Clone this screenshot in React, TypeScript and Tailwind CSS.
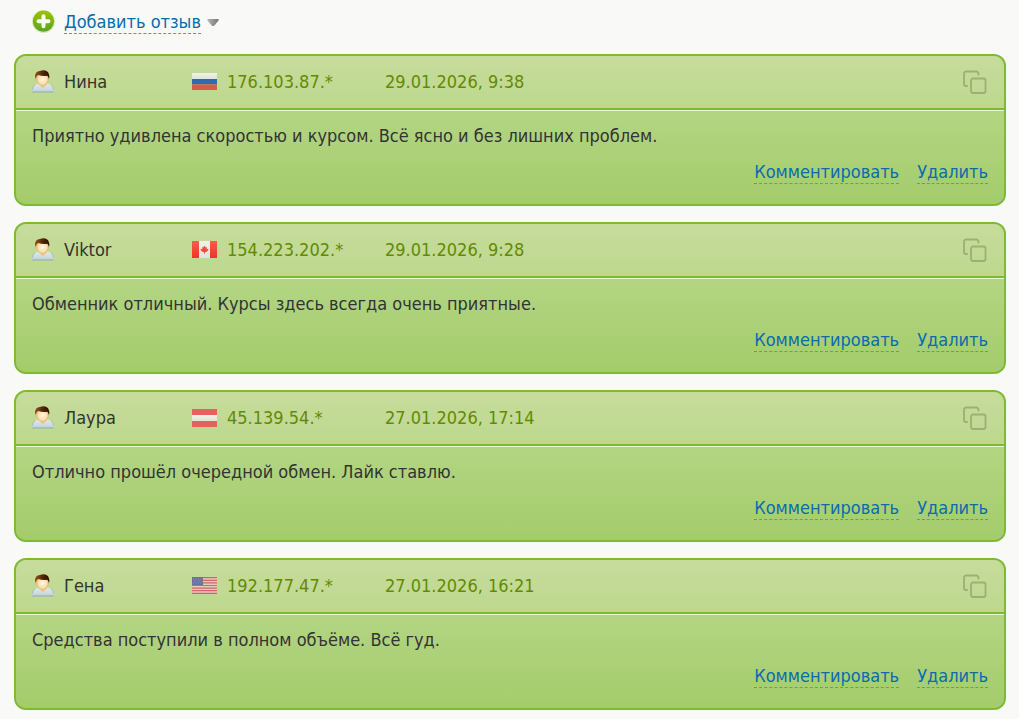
type Country = 'ru' | 'ca' | 'at' | 'us';

interface Review {
  name: string;
  country: Country;
  ip: string;
  date: string;
  text: string;
}

const reviews: Review[] = [
  {
    name: 'Нина',
    country: 'ru',
    ip: '176.103.87.*',
    date: '29.01.2026, 9:38',
    text: 'Приятно удивлена скоростью и курсом. Всё ясно и без лишних проблем.',
  },
  {
    name: 'Viktor',
    country: 'ca',
    ip: '154.223.202.*',
    date: '29.01.2026, 9:28',
    text: 'Обменник отличный. Курсы здесь всегда очень приятные.',
  },
  {
    name: 'Лаура',
    country: 'at',
    ip: '45.139.54.*',
    date: '27.01.2026, 17:14',
    text: 'Отлично прошёл очередной обмен. Лайк ставлю.',
  },
  {
    name: 'Гена',
    country: 'us',
    ip: '192.177.47.*',
    date: '27.01.2026, 16:21',
    text: 'Средства поступили в полном объёме. Всё гуд.',
  },
];

// Gradients shared by all icons on the page
function IconDefs() {
  return (
    <svg width="0" height="0" className="absolute" aria-hidden="true">
      <defs>
        <linearGradient id="plus" x1="0" y1="0" x2="0" y2="1">
          <stop offset="0" stopColor="#9cc400" />
          <stop offset="1" stopColor="#55a524" />
        </linearGradient>
        <linearGradient id="caret" x1="0" y1="0" x2="1" y2="0">
          <stop offset="0" stopColor="#b5b5b5" />
          <stop offset="1" stopColor="#777777" />
        </linearGradient>
        <radialGradient id="face" cx="0.5" cy="0.55" r="0.55">
          <stop offset="0" stopColor="#fff6e0" />
          <stop offset="0.6" stopColor="#fbdfae" />
          <stop offset="1" stopColor="#cf9450" />
        </radialGradient>
        <linearGradient id="hair" x1="0" y1="0" x2="1" y2="0">
          <stop offset="0" stopColor="#96591c" />
          <stop offset="0.5" stopColor="#54290a" />
          <stop offset="1" stopColor="#2a1202" />
        </linearGradient>
        <linearGradient id="shirt" x1="0" y1="0" x2="0" y2="1">
          <stop offset="0" stopColor="#dfe9ea" />
          <stop offset="0.75" stopColor="#c9d8da" />
          <stop offset="1" stopColor="#9fb9b6" />
        </linearGradient>
        <linearGradient id="white" x1="0" y1="0" x2="0" y2="1">
          <stop offset="0" stopColor="#eff2e7" />
          <stop offset="1" stopColor="#dfe4d8" />
        </linearGradient>
        <linearGradient id="canada" x1="0" y1="0" x2="0" y2="1">
          <stop offset="0" stopColor="#f2604b" />
          <stop offset="1" stopColor="#ee3524" />
        </linearGradient>
      </defs>
    </svg>
  );
}

function PlusIcon() {
  return (
    <svg width="24" height="24" viewBox="0 0 24 24" aria-hidden="true">
      <circle cx="12.500" cy="11.500" r="11.500" fill="#dbe8c4" />
      <circle cx="12.500" cy="11.200" r="10.600" fill="url(#plus)" />
      <path d="M12.500 6.300v10M7.500 11.300h10" stroke="#fbfdf4" strokeWidth="4" strokeLinecap="round" />
    </svg>
  );
}

function UserIcon() {
  return (
    <svg width="22" height="24" viewBox="0 0 22 24" aria-hidden="true">
      <path d="M.5 22.500V19.500c0-3.800 3-5.300 6.500-6h7.500c4 .7 7 2.200 7 6v3z" fill="url(#shirt)" />
      <path d="M.5 19.500c.1-2.500 1-3.700 2.500-4.600M21.500 19.500c-.1-2.500-1-3.700-2.500-4.600M.5 22h21" stroke="#9fb9bb" strokeWidth="1" fill="none" />
      <path d="M7 14l4 4.500 4-4.500z" fill="#eec58c" />
      <path d="M3.800 7c0-4 2.500-6 6.700-6s6.700 2 6.700 6c0 4.500-2.500 8.700-6.700 8.700S3.800 11.500 3.800 7z" fill="url(#face)" />
      <path d="M3.200 9C2.300 4 4 1.200 8 1c4-1.500 8-.4 8.800 3 .7 1.800.6 3.500.1 5-.3-1.700-.8-2.700-1.900-3.300-3 .5-6 .2-8.700-.7C4.700 6 4 7.300 3.200 9z" fill="url(#hair)" />
    </svg>
  );
}

function CopyIcon() {
  return (
    <svg width="24" height="24" viewBox="0 0 24 24" fill="none" stroke="#9caf74" strokeWidth="1.800" aria-hidden="true">
      <rect x="8" y="8.500" width="14.500" height="14.500" rx="2" />
      <path d="M15.500 5.300V3.500a2 2 0 0 0-2-2H3a2 2 0 0 0-2 2V14a2 2 0 0 0 2 2h1.800" />
    </svg>
  );
}

function Flag({ country }: { country: Country }) {
  return (
    <svg width="25" height="18" viewBox="0 0 25 18" className="shrink-0" role="img" aria-label={country}>
      {country === 'ru' && (
        <>
          <path d="M0 0h25v6H0z" fill="url(#white)" />
          <path d="M0 6h25v5.500H0z" fill="#3a66ad" />
          <path d="M0 11.500h25V17H0z" fill="#d95b47" />
        </>
      )}
      {country === 'ca' && (
        <>
          <path d="M0 0h25v17H0z" fill="url(#canada)" />
          <path d="M7 0h11v17H7z" fill="url(#white)" />
          <path d="M12.500 4.800l1.200 1.700 1.100-.4-.2 2.100 1.500-.5.300 1.400-2.100 2-1.400.1v1.600h-.8v-1.600l-1.400-.1-2.100-2 .3-1.400 1.500.5-.2-2.100 1.100.4z" fill="#f04a38" />
        </>
      )}
      {country === 'at' && (
        <>
          <path d="M0 0h25v18H0z" fill="#e6605c" />
          <path d="M0 6h25v6H0z" fill="url(#white)" />
        </>
      )}
      {country === 'us' && (
        <>
          <path d="M0 0h25v17H0z" fill="#e3cdbc" />
          <path d="M0 .7h25M0 3.300h25M0 5.900h25M0 8.500h25M0 11.100h25M0 13.700h25M0 16.300h25" stroke="#d2646a" strokeWidth="1.200" />
          <path d="M0 0h11v8H0z" fill="#67719a" />
          <path d="M1 2h9M2 4h9M1 6h9" stroke="#9298ae" strokeWidth="1" strokeDasharray="1 1.500" />
        </>
      )}
    </svg>
  );
}

function ActionLink({ children }: { children: string }) {
  return (
    <a href="#" className="border-b border-dashed border-[#2ea2ee] leading-[22px] text-[#0a6cae]">
      {children}
    </a>
  );
}

function ReviewCard({ review }: { review: Review }) {
  return (
    <article className="overflow-hidden rounded-xl border-2 border-[#7fba37] bg-[#a4cc6b]">
      <header className="flex h-[54px] items-center border-b-2 border-[#7fba37] bg-linear-to-b from-[#c7dc9c] to-[#bdd88e] pr-[17px] pl-4">
        <div className="flex w-40 items-center gap-[10px]">
          <UserIcon />
          <span>{review.name}</span>
        </div>
        <div className="flex w-[193px] items-center gap-[10px] text-[#648a00]">
          <Flag country={review.country} />
          <span>{review.ip}</span>
        </div>
        <time className="text-[#648a00]">{review.date}</time>
        <button type="button" className="ml-auto" aria-label="Копировать">
          <CopyIcon />
        </button>
      </header>
      <div className="border-t border-[#eef6dc] bg-linear-to-b from-[#b3d583] to-[#a4cc6b] px-4 pt-[13px] pb-5">
        <p>{review.text}</p>
        <div className="mt-[13px] flex justify-end gap-[18px]">
          <ActionLink>Комментировать</ActionLink>
          <ActionLink>Удалить</ActionLink>
        </div>
      </div>
    </article>
  );
}

export default function App() {
  return (
    <main className="min-h-screen bg-[#f9f9f7] pt-[10px] pr-[13px] pb-[9px] pl-[14px] font-['DejaVu_Sans_Condensed','DejaVu_Sans',sans-serif] text-[18px] leading-6 text-[#333333]">
      <IconDefs />
      <div className="flex items-center pl-[17px]">
        <PlusIcon />
        <a href="#" className="ml-[9px] border-b border-dashed border-[#2ea2ee] leading-[22px] text-[#0a6cae]">
          Добавить отзыв
        </a>
        <svg width="12" height="8" viewBox="0 0 12 8" className="ml-[6px]" aria-hidden="true">
          <path d="M.5 1h11v1.500L7 8H5L.5 2.500z" fill="url(#caret)" />
        </svg>
      </div>
      <section className="mt-5 flex flex-col gap-4">
        {reviews.map((review) => (
          <ReviewCard key={review.ip} review={review} />
        ))}
      </section>
    </main>
  );
}
